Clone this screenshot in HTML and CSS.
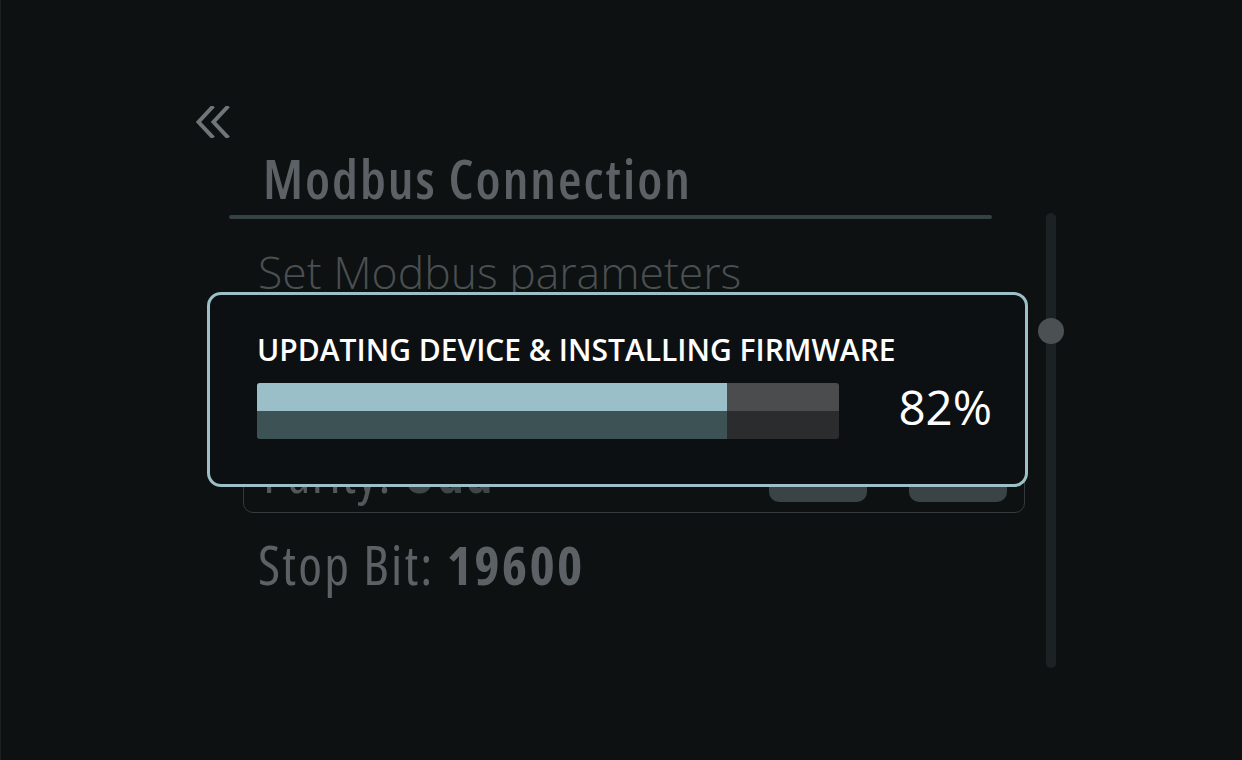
FILE: index.html
```html
<!DOCTYPE html>
<html>
<head>
<meta charset="utf-8">
<link rel="stylesheet" href="styles.css">
</head>
<body>
<div class="screen">
  <div class="main">
    <div class="back">
      <svg width="38" height="32" viewBox="0 0 38 32" fill="none" stroke="#6f7679" stroke-width="4" stroke-linecap="square">
        <polyline points="16,1.5 2.5,16 16,30.5"/>
        <polyline points="31,1.5 17.5,16 31,30.5"/>
      </svg>
    </div>
    <h1 class="title">Modbus Connection</h1>
    <div class="rule"></div>
    <p class="subtitle">Set Modbus parameters</p>
    <div class="card">
      <div class="row">
        <span class="field">Parity: <b>Odd</b></span>
        <span class="btns"><span class="btn"></span><span class="btn"></span></span>
      </div>
    </div>
    <p class="stop">Stop Bit: <b>19600</b></p>
  </div>
  <div class="scroll"><div class="thumb"></div></div>

  <div class="modal">
    <div class="modal-title">UPDATING DEVICE &amp; INSTALLING FIRMWARE</div>
    <div class="progress-row">
      <div class="bar">
        <div class="bar-fill" style="width:80.8%"></div>
      </div>
      <div class="pct">82%</div>
    </div>
  </div>
</div>
</body>
</html>
```
FILE: styles.css
```css
html, body {
  margin: 0;
  padding: 0;
  background: #0d1112;
}
body {
  width: 1242px;
  height: 760px;
  overflow: hidden;
  font-family: "Open Sans", "Noto Sans", sans-serif;
  border-left: 1px solid #1a1f20;
  box-sizing: border-box;
}
.screen {
  position: relative;
  display: flex;
  align-items: flex-start;
  padding: 106px 0 0 195px;
}
.main {
  width: 829px;
  display: flex;
  flex-direction: column;
}
.back {
  height: 32px;
}
.back svg { display: block; }
.title {
  margin: 13px 0 0 67px;
  font-size: 54px;
  line-height: 54px;
  font-weight: 600;
  font-stretch: 75%;
  letter-spacing: 2px;
  color: #5b6164;
}
.rule {
  margin: 10px 0 0 33px;
  width: 763px;
  height: 4px;
  border-radius: 2px;
  background: #364143;
}
.subtitle {
  margin: 30px 0 0 62px;
  font-size: 44.5px;
  line-height: 46px;
  font-weight: 300;
  font-stretch: 100%;
  color: #4a4f51;
}
.card {
  margin: 12px 0 0 47px;
  height: 206px;
  box-sizing: border-box;
  border: 1px solid #353b3d;
  border-radius: 10px;
  padding: 0 17px 10px 19px;
  display: flex;
  flex-direction: column;
  justify-content: flex-end;
}
.row {
  display: flex;
  align-items: flex-end;
  justify-content: space-between;
  height: 44px;
}
.field {
  font-size: 54px;
  line-height: 54px;
  padding-bottom: 3px;
  font-weight: 400;
  font-stretch: 75%;
  letter-spacing: 1.5px;
  color: #52585a;
  white-space: nowrap;
}
.field b { font-weight: 700; color: #3f4649; }
.btns {
  display: flex;
  gap: 42px;
}
.btn {
  width: 98px;
  height: 44px;
  border-radius: 10px;
  background: #3a4446;
}
.stop {
  margin: 24px 0 0 62px;
  font-size: 54px;
  line-height: 54px;
  font-weight: 400;
  font-stretch: 75%;
  letter-spacing: 2.2px;
  color: #5b6164;
}
.stop b { font-weight: 700; }
.scroll {
  margin: 107px 0 0 21px;
  width: 10px;
  height: 455px;
  border-radius: 5px;
  background: #1c2224;
  position: relative;
}
.thumb {
  position: absolute;
  left: -8px;
  top: 105px;
  width: 26px;
  height: 26px;
  border-radius: 50%;
  background: #4b5052;
}
.modal {
  position: absolute;
  left: 206px;
  top: 292px;
  width: 821px;
  height: 195px;
  box-sizing: border-box;
  border: 3px solid #9cbfc8;
  border-radius: 14px;
  background: #0c1012;
  padding: 32px 33px 0 47px;
  display: flex;
  flex-direction: column;
  gap: 11px;
}
.modal-title {
  font-size: 30px;
  line-height: 45px;
  font-weight: 600;
  font-stretch: 100%;
  color: #ffffff;
  white-space: nowrap;
}
.progress-row {
  display: flex;
  align-items: center;
  justify-content: space-between;
}
.bar {
  position: relative;
  width: 582px;
  height: 56px;
  border-radius: 3px;
  overflow: hidden;
  background: linear-gradient(#4a4c4e 0 50%, #2a2c2e 50% 100%);
}
.bar-fill {
  height: 100%;
  background: linear-gradient(#9bbfc8 0 50%, #3c5255 50% 100%);
}
.pct {
  font-size: 47.5px;
  line-height: 46px;
  font-weight: 500;
  font-stretch: 100%;
  color: #ffffff;
  margin-bottom: 9px;
}
```
